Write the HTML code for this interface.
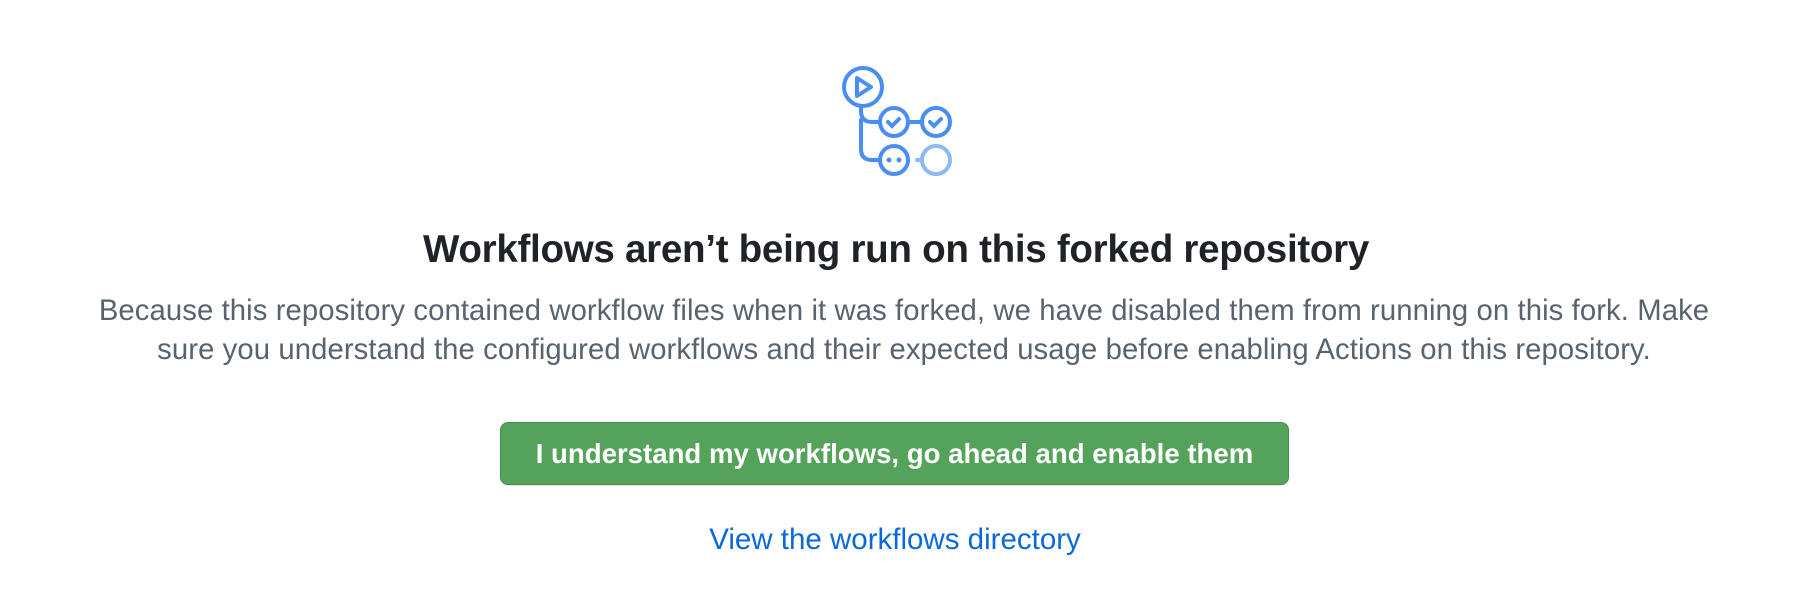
<!DOCTYPE html>
<html><head><meta charset="utf-8"><style>
html,body{margin:0;padding:0;background:#fff;width:1814px;height:614px;overflow:hidden;font-family:"Liberation Sans",sans-serif}
svg.ic{position:absolute;left:0;top:0}
.t{position:absolute;left:0;width:1814px;text-align:center;white-space:nowrap}
h1.t{margin:0;font-size:38.6px;font-weight:bold;color:#1f2328;top:228px;left:-11px;letter-spacing:-0.3px}
.p{top:292px;left:-3px;font-size:29.25px;line-height:39px;color:#59636e;letter-spacing:0.1px}
.btn{position:absolute;left:500px;top:422px;width:789px;height:63px;border:1px solid #4a8a4f;border-radius:8px;background:#55a35a;color:#fff;font-size:27.6px;font-weight:bold;line-height:61px;text-align:center;box-sizing:border-box;box-shadow:0 1px 0 rgba(31,35,40,.1);white-space:nowrap}
.link{top:523px;left:-12px;font-size:29.5px;color:#0969da}
</style></head><body>
<svg class="ic" width="1814" height="200" fill="none" stroke-width="4" stroke-linecap="round">
<g transform="translate(-1,1)">
<g stroke="#4a8ef5">
<circle cx="864" cy="86" r="19"/>
<path d="M858 77 L858 95 L872 86 Z" stroke-linejoin="round"/>
<path d="M862 105 V110 Q862 121 873 121 H881"/>
<path d="M862 119 V148 Q862 159 873 159 H881"/>
<circle cx="895" cy="121" r="14"/>
<circle cx="937" cy="121" r="14"/>
<path d="M909 121 H923"/>
<path d="M889 121 l4 4 l7 -7"/>
<path d="M931 121 l4 4 l7 -7"/>
<circle cx="895" cy="159" r="14"/>
<circle cx="890" cy="159" r="1" fill="#4a8ef5" stroke-width="3"/>
<circle cx="900" cy="159" r="1" fill="#4a8ef5" stroke-width="3"/>
</g>
<g stroke="#8bb8f7">
<circle cx="937" cy="159" r="14"/>
<path d="M918 159 H920"/>
</g>
</g>
</svg>
<h1 class="t">Workflows aren’t being run on this forked repository</h1>
<div class="t p">Because this repository contained workflow files when it was forked, we have disabled them from running on this fork. Make<br>sure you understand the configured workflows and their expected usage before enabling Actions on this repository.</div>
<div class="btn">I understand my workflows, go ahead and enable them</div>
<div class="t link">View the workflows directory</div>
</body></html>
